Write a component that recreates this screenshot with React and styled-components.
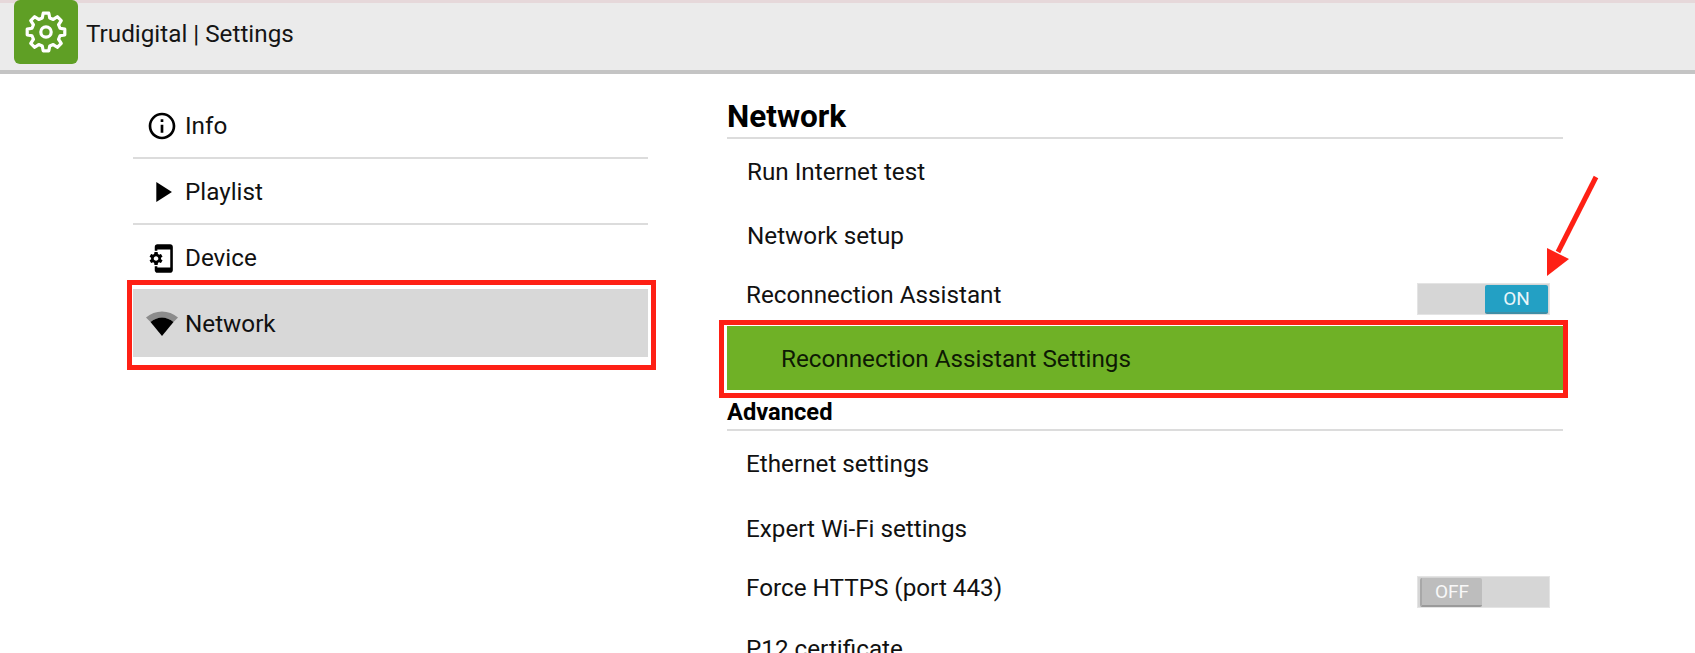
import React from 'react'
import styled, { createGlobalStyle, css } from 'styled-components'
import { MdInfoOutline, MdPlayArrow, MdPhonelinkSetup } from 'react-icons/md'

const GlobalStyle = createGlobalStyle`
  html, body {
    margin: 0;
    padding: 0;
    height: 653px;
    overflow: hidden;
    background: #fff;
    font-family: Roboto, "Liberation Sans", sans-serif;
    color: #111;
  }
`

// 8 tooth gear outline
const gearPath = () => {
  const pt = (r, deg) => {
    const a = (deg * Math.PI) / 180
    return `${(21 + r * Math.sin(a)).toFixed(2)} ${(21 - r * Math.cos(a)).toFixed(2)}`
  }
  let d = ''
  for (let i = 0; i < 8; i++) {
    const c = i * 45
    d += `${i === 0 ? 'M' : 'L'}${pt(14.5, c - 15)} L${pt(19, c - 8.5)} L${pt(19, c + 8.5)} L${pt(14.5, c + 15)} `
  }
  return d + 'Z'
}

const GearIcon = () => (
  <svg width="42" height="42" viewBox="0 0 42 42" fill="none" stroke="#fff">
    <path d={gearPath()} strokeWidth="3.2" strokeLinejoin="round" />
    <circle cx="21" cy="21" r="5.2" strokeWidth="3.2" />
  </svg>
)

const WifiIcon = () => (
  <svg width="32" height="26" viewBox="0 0 32 26">
    <path d="M0 6.5 C9 -1.5 23 -1.5 32 6.5 L27.5 11 C20 5 12 5 4.5 11 Z" fill="#8c8c8c" />
    <path d="M4.5 11 C12 5 20 5 27.5 11 L16 25 Z" fill="#000" />
  </svg>
)

const navItems = [
  { label: 'Info', icon: <MdInfoOutline size={32} />, height: 66 },
  { label: 'Playlist', icon: <MdPlayArrow size={34} />, height: 66 },
  { label: 'Device', icon: <MdPhonelinkSetup size={31} />, height: 64, plain: true },
  { label: 'Network', icon: <WifiIcon />, height: 68, active: true, plain: true },
]

const App = () => {
  return (
    <Page>
      <GlobalStyle />
      <TopBar>
        <Logo>
          <GearIcon />
        </Logo>
        <AppTitle>Trudigital | Settings</AppTitle>
      </TopBar>

      <Main>
        <Sidebar>
          {navItems.map((item) => (
            <NavItem key={item.label} $height={item.height} $active={item.active} $plain={item.plain}>
              <NavIcon>{item.icon}</NavIcon>
              {item.label}
            </NavItem>
          ))}
        </Sidebar>

        <Content>
          <Heading>Network</Heading>
          <Row $height={66} $indent={20}>Run Internet test</Row>
          <Row $height={62} $indent={20}>Network setup</Row>
          <Row $height={55} $indent={19}>
            Reconnection Assistant
            <Toggle>
              <Thumb $on>ON</Thumb>
            </Toggle>
          </Row>
          <HighlightRow>Reconnection Assistant Settings</HighlightRow>
          <SubHeading>Advanced</SubHeading>
          <Row $height={66} $indent={19}>Ethernet settings</Row>
          <Row $height={64} $indent={19}>Expert Wi-Fi settings</Row>
          <Row $height={54} $indent={19}>
            Force HTTPS (port 443)
            <Toggle>
              <Thumb>OFF</Thumb>
            </Toggle>
          </Row>
          <Row $height={68} $indent={19}>P12 certificate</Row>
        </Content>
      </Main>

      <Arrow width="60" height="110" viewBox="0 0 60 110">
        <line x1="55" y1="3" x2="17" y2="78" stroke="#fe2015" strokeWidth="5" />
        <polygon points="6,102 6,74 28,85" fill="#fe2015" />
      </Arrow>
    </Page>
  )
}

export default App

/* ---------------- Styled Components ---------------- */

const Page = styled.div`
  position: relative;
  width: 1695px;
  height: 653px;
  overflow: hidden;
`

const TopBar = styled.div`
  box-sizing: border-box;
  display: flex;
  align-items: flex-start;
  height: 74px;
  padding-left: 14px;
  gap: 8px;
  background: #ebebeb;
  border-top: 3px solid #e6d8da;
  border-bottom: 4px solid #c4c4c4;
`

const Logo = styled.div`
  display: flex;
  align-items: center;
  justify-content: center;
  width: 64px;
  height: 64px;
  margin-top: -3px;
  border-radius: 6px;
  background: #5f9f25;
`

const AppTitle = styled.div`
  font-size: 24.25px;
  line-height: 63px;
  color: #151515;
`

const Main = styled.div`
  display: flex;
  align-items: flex-start;
  padding-left: 133px;
`

const Sidebar = styled.div`
  width: 515px;
  margin-top: 19px;
  margin-right: 79px;
`

/* red annotation frame drawn over a row */
const annotation = css`
  position: relative;

  &::after {
    content: '';
    position: absolute;
    box-sizing: border-box;
    border: 5.5px solid #fe2015;
  }
`

const NavItem = styled.div`
  box-sizing: border-box;
  display: flex;
  align-items: center;
  height: ${(p) => p.$height}px;
  padding-top: 2px;
  font-size: 24.25px;
  background: ${(p) => (p.$active ? '#d8d8d8' : 'transparent')};
  border-bottom: ${(p) => (p.$plain ? 'none' : '2px solid #dcdcdc')};

  ${(p) =>
    p.$active &&
    css`
      ${annotation}
      &::after {
        inset: -9px -8px -13px -6px;
      }
    `}
`

const NavIcon = styled.span`
  display: flex;
  align-items: center;
  justify-content: center;
  width: 34px;
  margin: 0 6px 0 12px;
  color: #000;
`

const Content = styled.div`
  width: 836px;
`

const Heading = styled.div`
  box-sizing: border-box;
  height: 65px;
  padding-top: 26px;
  font-size: 31.5px;
  font-weight: 700;
  line-height: 34px;
  color: #000;
  border-bottom: 2px solid #dcdcdc;
`

const Row = styled.div`
  box-sizing: border-box;
  display: flex;
  align-items: center;
  justify-content: space-between;
  height: ${(p) => p.$height}px;
  padding-left: ${(p) => p.$indent}px;
  padding-right: 13px;
  font-size: 24.25px;
`

const HighlightRow = styled.div`
  ${annotation}
  box-sizing: border-box;
  display: flex;
  align-items: center;
  height: 64px;
  margin-top: 4px;
  padding: 2px 0 0 54px;
  font-size: 24.25px;
  color: #0e1a04;
  background: #6fb126;

  &::after {
    inset: -6px -5px -8px -8px;
  }
`

const SubHeading = styled.div`
  box-sizing: border-box;
  height: 41px;
  padding-top: 9px;
  font-size: 23.7px;
  font-weight: 700;
  line-height: 26px;
  color: #000;
  border-bottom: 2px solid #dcdcdc;
`

const Toggle = styled.div`
  box-sizing: border-box;
  display: flex;
  width: 133px;
  height: 32px;
  margin-top: 8px;
  padding: 1px 1px 1px 2px;
  background: #d6d6d6;
  border: 1px solid #e4e4e4;
`

const Thumb = styled.div`
  box-sizing: border-box;
  display: flex;
  align-items: center;
  justify-content: center;
  width: ${(p) => (p.$on ? '63px' : '62px')};
  height: 29px;
  margin-left: ${(p) => (p.$on ? 'auto' : '0')};
  border-radius: 2px;
  font-size: 19px;
  color: ${(p) => (p.$on ? '#eaf6fa' : '#f8f8f8')};
  background: ${(p) => (p.$on ? '#23a0c4' : '#bdbdbd')};
  border-bottom: 2px solid ${(p) => (p.$on ? '#3e8ea6' : '#9a9a9a')};
  border-left: ${(p) => (p.$on ? 'none' : '2px solid #a8a8a8')};
`

const Arrow = styled.svg`
  position: absolute;
  left: 1541px;
  top: 174px;
`
